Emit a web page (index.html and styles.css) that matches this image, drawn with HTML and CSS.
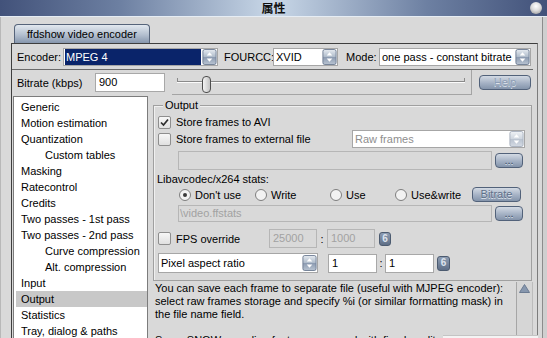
FILE: index.html
```html
<!DOCTYPE html>
<html lang="en">
<head>
  <meta charset="UTF-8" />
  <title>ffdshow video encoder</title>
  <link rel="stylesheet" href="styles.css">
</head>
<body>
  <svg class="defs" width="0" height="0" aria-hidden="true">
    <defs>
      <linearGradient id="spinGrad" x1="0" y1="0" x2="0" y2="1">
        <stop offset="0" stop-color="#e6ebf1"/>
        <stop offset="0.48" stop-color="#b0bccb"/>
        <stop offset="0.52" stop-color="#8c9bb1"/>
        <stop offset="1" stop-color="#b9c4d2"/>
      </linearGradient>
      <symbol id="spin" viewBox="0 0 15 17">
        <rect x="0.5" y="0.5" width="14" height="16" rx="2" fill="url(#spinGrad)" stroke="#6e7d93"/>
        <path d="M4.5 7 L7.5 3.5 L10.5 7 Z" fill="#fff"/>
        <path d="M4.5 10 L7.5 13.5 L10.5 10 Z" fill="#fff"/>
      </symbol>
    </defs>
  </svg>

  <div class="window">
    <div class="titlebar">
      <span></span>
      <span class="title">属性</span>
      <span class="orb"></span>
    </div>

    <div class="frame">
      <div class="tabs">
        <div class="tab">ffdshow video encoder</div>
      </div>

      <div class="panel">
        <!-- encoder selection -->
        <div class="top-row">
          <span class="lbl enc-lbl">Encoder:</span>
          <div class="select enc-sel selected"><span>MPEG 4</span><svg class="spin"><use href="#spin"/></svg></div>
          <span class="lbl fourcc-lbl">FOURCC:</span>
          <div class="select fourcc-sel"><span>XVID</span><svg class="spin"><use href="#spin"/></svg></div>
          <span class="lbl mode-lbl">Mode:</span>
          <div class="select mode-sel"><span>one pass - constant bitrate</span><svg class="spin"><use href="#spin"/></svg></div>
        </div>

        <div class="page">
          <div class="bitrate-row">
            <span class="lbl bitrate-lbl">Bitrate (kbps)</span>
            <div class="field bitrate-field">900</div>
            <div class="slider">
              <div class="track"></div>
              <div class="thumb"></div>
            </div>
            <div class="btn help-btn">Help</div>
          </div>

          <div class="main">
            <ul class="tree">
              <li>Generic</li>
              <li>Motion estimation</li>
              <li>Quantization</li>
              <li class="sub">Custom tables</li>
              <li>Masking</li>
              <li>Ratecontrol</li>
              <li>Credits</li>
              <li>Two passes - 1st pass</li>
              <li>Two passes - 2nd pass</li>
              <li class="sub">Curve compression</li>
              <li class="sub">Alt. compression</li>
              <li>Input</li>
              <li class="current">Output</li>
              <li>Statistics</li>
              <li>Tray, dialog &amp; paths</li>
            </ul>

            <div class="pane">
              <div class="group">
                <span class="legend">Output</span>

                <div class="avi-row">
                  <span class="check"><svg viewBox="0 0 11 11"><path d="M2 5.5 L4.5 8 L9 2.5" fill="none" stroke="#2c2c2c" stroke-width="1.7"/></svg></span>
                  <span>Store frames to AVI</span>
                </div>

                <div class="ext-row">
                  <span class="check"></span>
                  <span>Store frames to external file</span>
                  <div class="select raw-sel off"><span>Raw frames</span><svg class="spin"><use href="#spin"/></svg></div>
                </div>

                <div class="path-row">
                  <div class="field off path-field"></div>
                  <div class="btn dots-btn">...</div>
                </div>

                <div class="stats-lbl">Libavcodec/x264 stats:</div>

                <div class="radio-row">
                  <span class="radio-opt w1"><span class="radio on"></span>Don't use</span>
                  <span class="radio-opt w2"><span class="radio"></span>Write</span>
                  <span class="radio-opt w3"><span class="radio"></span>Use</span>
                  <span class="radio-opt"><span class="radio"></span>Use&amp;write</span>
                  <div class="btn bitrate-btn">Bitrate</div>
                </div>

                <div class="stats-row">
                  <div class="field off stats-field">\video.ffstats</div>
                  <div class="btn dots-btn">...</div>
                </div>

                <div class="fps-row">
                  <span class="fps-lbl"><span class="check"></span><span>FPS override</span></span>
                  <div class="field off num-field">25000</div>
                  <span class="colon">:</span>
                  <div class="field off num-field">1000</div>
                  <span class="mini fps-mini">6</span>
                </div>

                <div class="aspect-row">
                  <div class="select aspect-sel"><span>Pixel aspect ratio</span><svg class="spin"><use href="#spin"/></svg></div>
                  <div class="field ratio-field first">1</div>
                  <span class="colon narrow">:</span>
                  <div class="field ratio-field">1</div>
                  <span class="mini aspect-mini">6</span>
                </div>
              </div>

              <div class="info">
                <div class="info-text">
                  You can save each frame to separate file (useful with MJPEG encoder):<br>
                  select raw frames storage and specify %i (or similar formatting mask) in<br>
                  the file name field.<br>
                  <br>
                  Some SNOW encoding features are used with fixed quality mode only.
                </div>
                <div class="scroll">
                  <div class="scroll-up"><svg viewBox="0 0 15 13"><path d="M2.5 10.5 L7.5 2.5 L12.5 10.5 Z" fill="#8797ae" stroke="#6b7b92"/></svg></div>
                </div>
              </div>
            </div>
          </div>
        </div>
      </div>
    </div>

    <div class="tip"></div>
  </div>
</body>
</html>
```

FILE: styles.css
```css
* {
  margin: 0;
  padding: 0;
  box-sizing: border-box;
}

html, body {
  width: 547px;
  height: 338px;
  overflow: hidden;
}

body {
  font-family: 'Liberation Sans', Arial, sans-serif;
  font-size: 11px;
  color: #000;
  background: #d9d9d9;
}

.defs {
  display: block;
  width: 0;
  height: 0;
  overflow: hidden;
}

.window {
  width: 547px;
  height: 338px;
  display: flex;
  flex-direction: column;
  position: relative;
  overflow: hidden;
}

/* title bar */
.titlebar {
  height: 17px;
  flex: none;
  display: grid;
  grid-template-columns: 1fr auto 1fr;
  align-items: center;
  background: linear-gradient(to right, #42527a 0%, #6d80a2 22%, #c9d8e8 50%, #6d80a2 78%, #42527a 100%);
  border-bottom: 1px solid #e6edf4;
}

.title {
  font-family: 'Noto Sans CJK SC', sans-serif;
  font-weight: bold;
  font-size: 12px;
  line-height: 16px;
  color: #111;
}

.orb {
  justify-self: end;
  width: 12px;
  height: 12px;
  margin-right: 5px;
  border-radius: 50%;
  background: radial-gradient(circle at 50% 35%, #ffffff 0%, #dcdcdc 45%, #8e8e8e 100%);
}

.frame {
  flex: 1;
  display: flex;
  flex-direction: column;
  box-shadow: inset -4px 0 0 #cfcfcf, inset -5px 0 0 #8c8c8c, inset 1px 0 0 #b8b8b8;
}

/* tab strip */
.tabs {
  height: 26px;
  flex: none;
  display: flex;
  align-items: flex-end;
  padding-left: 14px;
}

.tab {
  width: 136px;
  height: 19px;
  padding-left: 12px;
  line-height: 18px;
  border: 1px solid #56647a;
  border-bottom: none;
  border-radius: 4px 4px 0 0;
  background: linear-gradient(#e2e8ef, #b3bfcf 55%, #8696ad);
}

.panel {
  flex: 1;
  width: 527px;
  margin-left: 11px;
  border-top: 1px solid #3e3e3e;
  border-left: 1px solid #3e3e3e;
  border-right: 1px solid #7c7c7c;
}

/* shared controls */
.lbl {
  flex: none;
  white-space: nowrap;
}

.select {
  flex: none;
  height: 18px;
  display: flex;
  align-items: center;
  justify-content: space-between;
  background: #fff;
  border: 1px solid #a6a6a6;
  padding-left: 2px;
  white-space: nowrap;
}

.select.selected span {
  background: #0a246a;
  color: #fff;
  flex: 1;
  align-self: stretch;
  line-height: 16px;
  padding-left: 1px;
  margin-right: 1px;
}

.select.selected {
  padding-left: 1px;
}

.select.off {
  color: #8e8e8e;
}

.select.off .spin {
  opacity: 0.6;
}

.spin {
  width: 15px;
  height: 16px;
  flex: none;
}

.field {
  flex: none;
  height: 19px;
  line-height: 17px;
  padding-left: 3px;
  background: #fff;
  border: 1px solid #a8a8a8;
  white-space: nowrap;
  overflow: hidden;
}

.field.off {
  background: #d9d9d9;
  border-color: #b6b6b6;
  color: #a2a2a2;
}

.btn {
  flex: none;
  height: 15px;
  line-height: 13px;
  text-align: center;
  color: #5f708a;
  border: 1px solid #52627a;
  border-radius: 4px;
  background: linear-gradient(#d3dae4, #a4b1c4 55%, #8494ab);
  text-shadow: 0 1px 0 #dde3ea;
}

.mini {
  flex: none;
  width: 12px;
  height: 14px;
  line-height: 12px;
  text-align: center;
  font-size: 10px;
  font-weight: bold;
  color: #dde4ee;
  border: 1px solid #4c5b70;
  border-radius: 3px;
  background: linear-gradient(#8e9db3, #5e6e86);
}

.check {
  flex: none;
  width: 13px;
  height: 13px;
  margin-right: 5px;
  border: 1px solid #8e8e8e;
  border-radius: 2px;
  background: linear-gradient(#f7f7f7, #e0e0e0);
  display: flex;
}

.check svg {
  width: 11px;
  height: 11px;
}

.radio {
  flex: none;
  width: 12px;
  height: 12px;
  margin-right: 4px;
  border: 1px solid #7e7e7e;
  border-radius: 50%;
  background: #f2f2f2;
  display: flex;
  align-items: center;
  justify-content: center;
}

.radio.on::after {
  content: '';
  width: 4px;
  height: 4px;
  border-radius: 50%;
  background: #3a3a3a;
}

/* encoder row */
.top-row {
  display: flex;
  align-items: center;
  height: 18px;
  margin: 4px 0 0 5px;
}

.enc-lbl { width: 46px; }
.enc-sel { width: 155px; }
.fourcc-lbl { width: 49px; margin-left: 6px; }
.fourcc-sel { width: 65px; }
.mode-lbl { width: 33px; margin-left: 8px; }
.mode-sel { width: 152px; }

.page {
  margin: 3px 4px 0 0;
  border-top: 1px solid #6a6a6a;
}

/* bitrate row */
.bitrate-row {
  display: flex;
  align-items: center;
  height: 25px;
  padding-left: 5px;
}

.bitrate-lbl { width: 78px; }
.bitrate-field { width: 70px; }

.slider {
  position: relative;
  align-self: stretch;
  width: 300px;
  margin-left: 7px;
  border-right: 1px solid #a4a4a4;
  border-bottom: 1px solid #a4a4a4;
  display: flex;
  align-items: center;
  padding: 0 6px 0 5px;
}

.track {
  flex: 1;
  height: 2px;
  border-top: 1px solid #8a8a8a;
  border-bottom: 1px solid #fbfbfb;
  position: relative;
}

.track::before,
.track::after {
  content: '';
  position: absolute;
  top: -4px;
  width: 1px;
  height: 4px;
  background: #8a8a8a;
}

.track::before { left: 0; }
.track::after { right: 0; }

.thumb {
  position: absolute;
  left: 30px;
  top: 6px;
  width: 9px;
  height: 17px;
  border: 1px solid #4e4e4e;
  border-radius: 4px;
  background: linear-gradient(to right, #f4f4f4, #c4c4c4);
}

.help-btn {
  width: 52px;
  margin-left: 7px;
  color: #8d9db5;
}

/* tree + pane */
.main {
  display: flex;
  margin-top: 1px;
  height: 260px;
}

.tree {
  list-style: none;
  width: 135px;
  margin-left: 1px;
  padding-top: 2px;
  background: #fff;
  border: 1px solid #7c7c7c;
}

.tree li {
  height: 16px;
  line-height: 16px;
  margin-left: 2px;
  padding-left: 5px;
  white-space: nowrap;
}

.tree li.sub {
  padding-left: 29px;
}

.tree li.current {
  background: #c8c8c8;
}

.pane {
  width: 381px;
  margin-left: 4px;
  display: flex;
  flex-direction: column;
}

.group {
  position: relative;
  height: 176px;
  margin: 9px 1px 0 1px;
  border: 1px solid #a0a0a0;
  box-shadow: inset 1px 1px 0 #f0f0f0;
}

.legend {
  position: absolute;
  top: -7px;
  left: 9px;
  padding: 0 2px;
  line-height: 13px;
  background: #d9d9d9;
}

.avi-row,
.ext-row,
.path-row,
.radio-row,
.stats-row,
.fps-row,
.aspect-row {
  display: flex;
  align-items: center;
}

.avi-row { margin-top: 9px; height: 14px; padding-left: 4px; }
.ext-row { margin-top: 1px; height: 18px; padding-left: 4px; }
.path-row { margin-top: 3px; height: 19px; padding-left: 24px; }
.stats-lbl { margin-top: 2px; height: 14px; line-height: 14px; padding-left: 3px; }
.radio-row { margin-top: 1px; height: 15px; padding-left: 25px; }
.stats-row { margin-top: 3px; height: 17px; padding-left: 24px; }
.fps-row { margin-top: 7px; height: 19px; padding-left: 4px; }
.aspect-row { margin-top: 5px; height: 20px; padding-left: 4px; }

.raw-sel {
  width: 173px;
  margin-left: auto;
  margin-right: 6px;
}

.path-field { width: 314px; }
.stats-field { width: 314px; height: 17px; line-height: 15px; padding-left: 1px; }

.dots-btn {
  width: 28px;
  margin-left: 3px;
  color: #3c4c64;
}

.radio-opt {
  display: flex;
  align-items: center;
  white-space: nowrap;
}

.radio-opt.w1 { width: 76px; }
.radio-opt.w2 { width: 75px; }
.radio-opt.w3 { width: 65px; }

.bitrate-btn {
  width: 49px;
  margin-left: auto;
  margin-right: 10px;
}

.fps-lbl {
  width: 111px;
  display: flex;
  align-items: center;
  white-space: nowrap;
}

.num-field { width: 48px; }

.colon {
  width: 10px;
  text-align: center;
}

.colon.narrow { width: 8px; }

.fps-mini { margin-left: 4px; }

.aspect-sel { width: 160px; height: 20px; }

.ratio-field { width: 49px; }
.ratio-field.first { margin-left: 10px; }

.aspect-mini {
  width: 13px;
  height: 15px;
  margin-left: 3px;
}

/* help text */
.info {
  flex: 1;
  display: flex;
  margin-top: 1px;
}

.info-text {
  width: 364px;
  padding-left: 3px;
  line-height: 13px;
  white-space: nowrap;
  overflow: hidden;
}

.scroll {
  width: 17px;
  border-left: 1px solid #a6a6a6;
  border-right: 1px solid #bcbcbc;
  background: #d6d6d6;
}

.scroll-up {
  height: 14px;
  display: flex;
  justify-content: center;
}

.scroll-up svg {
  width: 15px;
  height: 13px;
}

.tip {
  position: absolute;
  left: 443px;
  bottom: 0;
  width: 95px;
  height: 3px;
  background: #f4f4f4;
  border-top: 1px solid #c4c4c4;
}
```
